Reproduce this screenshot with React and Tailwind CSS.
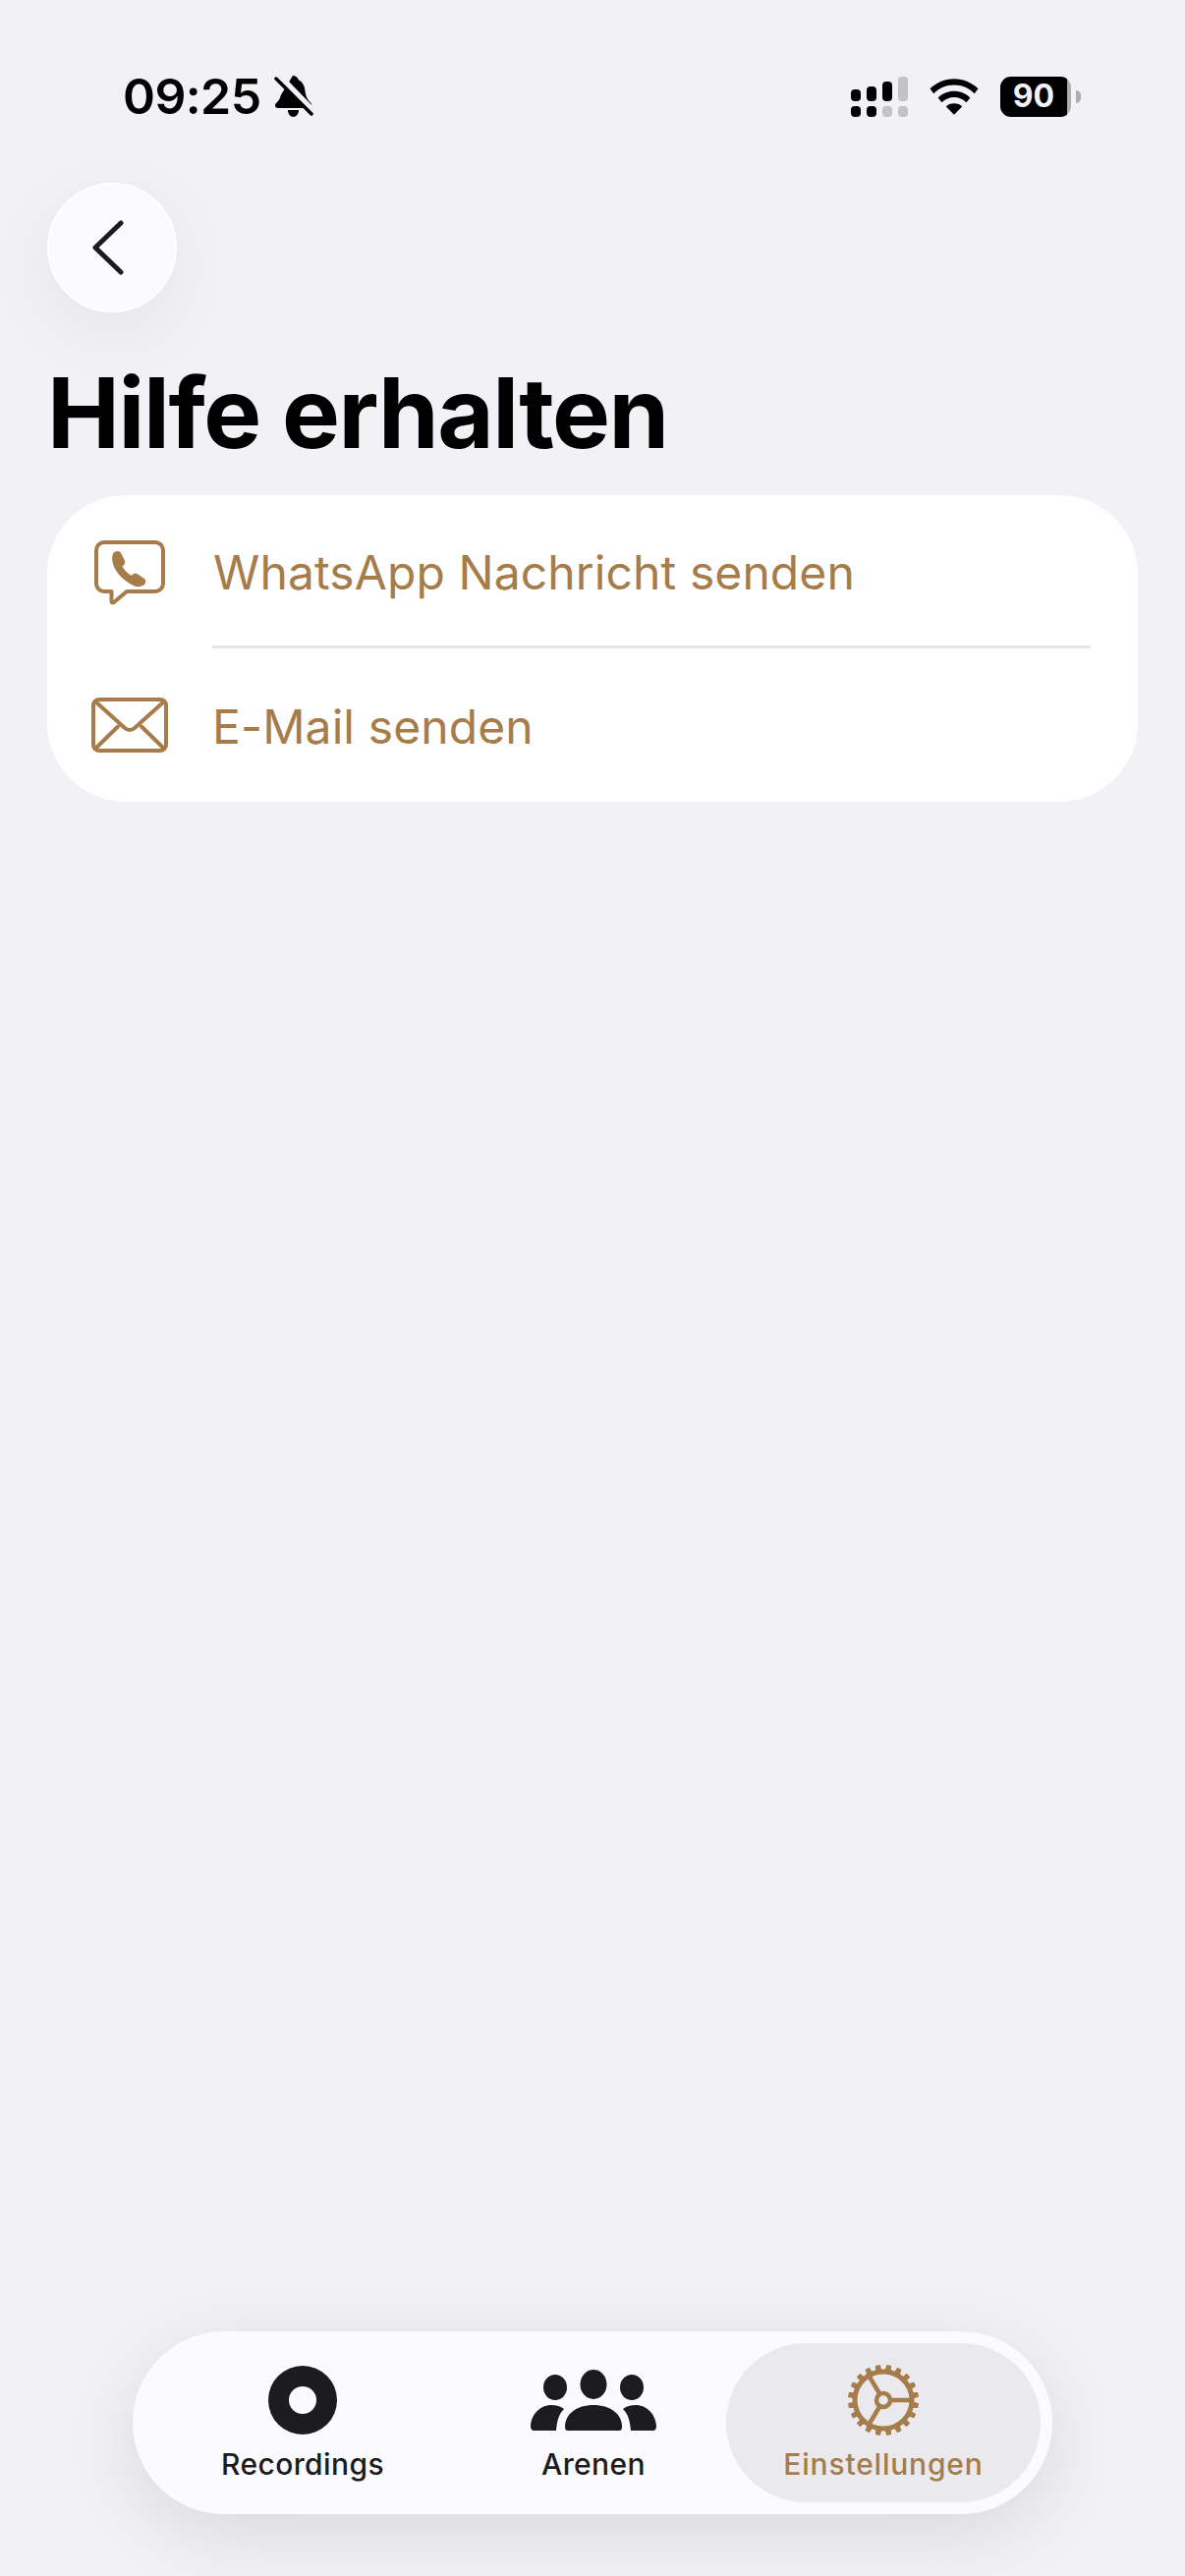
import React from 'react';

const Bell = () => (
  <svg width="40" height="42" viewBox="0 0 40 42" className="ml-[13px]">
    <path d="M19 0c3 0 5 2 6 4.500 4 2 6 6 6.500 11 .5 5 2 8.500 6 12.500 1.500 1.500 1 5-2 5H4c-3 0-4-3-2-5 3-2.500 4-5 5-8.500z" fill="#000" />
    <path d="M14 35h11c0 4-2.500 7-5.500 7S14 39 14 35z" fill="#000" />
    <path d="M5 0l36 37" stroke="#f1f1f6" strokeWidth="6" />
    <path d="M2 3l36 36" stroke="#000" strokeWidth="3.500" strokeLinecap="round" />
  </svg>
);

const Signal = () => (
  <svg width="58" height="41" viewBox="0 0 58 41">
    <rect x="0" y="13" width="10" height="12" rx="4" fill="#000" />
    <rect x="16" y="10" width="10" height="15" rx="4" fill="#000" />
    <rect x="32" y="5" width="10" height="20" rx="4" fill="#000" />
    <rect x="48" y="0" width="10" height="25" rx="4" fill="#c2c2c7" />
    <rect x="0" y="30" width="10" height="11" rx="4" fill="#000" />
    <rect x="16" y="30" width="10" height="11" rx="4" fill="#000" />
    <rect x="32" y="30" width="10" height="11" rx="4" fill="#c2c2c7" />
    <rect x="48" y="30" width="10" height="11" rx="4" fill="#c2c2c7" />
  </svg>
);

const Wifi = () => (
  <svg width="50" height="37" viewBox="0 0 52 38">
    <path d="M26 0c10 0 19 4 25.500 10.500l-4 5C42 10 34.500 6.500 26 6.500S10 10 4.500 15.500l-4-5C7 4 16 0 26 0z" fill="#000" />
    <path d="M26 13c6.500 0 12.500 2.500 17 7l-4 5c-3.500-3.500-8-5.500-13-5.500S16.500 21.500 13 25l-4-5c4.500-4.500 10.500-7 17-7z" fill="#000" />
    <path d="M26 26c3.500 0 6.500 1.300 8.500 3.300L26 38l-8.500-8.700c2-2 5-3.300 8.500-3.300z" fill="#000" />
  </svg>
);

const Battery = () => (
  <div className="flex items-center">
    <div className="h-[41px] w-[72px] rounded-[11px] overflow-hidden bg-[#adadb0]">
      <div className="h-full w-[68px] bg-black flex items-center justify-center">
        <span className="text-[32px] leading-none font-bold text-[#f1f1f6]">90</span>
      </div>
    </div>
    <div className="w-[5px] h-[13px] ml-[5px] rounded-r-full bg-[#adadb0]" />
  </div>
);

const PhoneBubble = () => (
  <svg width="72" height="66" viewBox="0 0 72 66" fill="none">
    <path d="M10 2h52c4.500 0 8 3.500 8 8v34c0 4.500-3.500 8-8 8H33L20 63c-1.500 1-2.500.3-2.500-1.500V52H10c-4.500 0-8-3.500-8-8V10c0-4.500 3.500-8 8-8z" stroke="#a67c4a" strokeWidth="4" strokeLinejoin="round" />
    <path d="M20 14c1-2 5-3 6-1l4 8c.6 1.300.2 2.500-.8 3.500l-2 2c2.500 4.500 6 8 10.500 10.500l2-1.500c1-1 2.400-1.100 3.500-.4l7 4.400c2 1.500 1 4.500-1 5.500-2.500 1.500-5.500 1.500-9 0-11-5-20-15-21-25-.2-2.500.2-4.500.8-6.500z" fill="#a67c4a" stroke="#a67c4a" strokeWidth="2" strokeLinejoin="round" />
  </svg>
);

const Envelope = () => (
  <svg width="78" height="56" viewBox="0 0 78 56" fill="none" stroke="#a67c4a" strokeWidth="4" strokeLinejoin="round" strokeLinecap="round">
    <rect x="2" y="2" width="74" height="52" rx="6" />
    <path d="M4 4l30 27c3 2.500 7 2.500 10 0L74 4" />
    <path d="M4 52l23-22.500M74 52L51 29.500" />
  </svg>
);

const Disc = () => (
  <svg width="70" height="70" viewBox="0 0 70 70">
    <path fillRule="evenodd" d="M35 0a35 35 0 1 0 0 70a35 35 0 0 0 0-70zM35 21a14 14 0 1 1 0 28a14 14 0 0 1 0-28z" fill="#1c1c1e" />
  </svg>
);

const People = () => (
  <svg width="128" height="62" viewBox="0 0 128 62" fill="#1c1c1e">
    <ellipse cx="25" cy="18" rx="12" ry="13" />
    <ellipse cx="64" cy="15" rx="13.500" ry="15" />
    <ellipse cx="103" cy="18" rx="12" ry="13" />
    <path d="M0 57C1 45 10 36 21 36c5 0 10 1.500 13 4-5 5-7 11-8 22H4c-3 0-4-2-4-5z" />
    <path d="M128 57c-1-12-10-21-21-21-5 0-10 1.500-13 4 5 5 7 11 8 22h22c3 0 4-2 4-5z" />
    <path d="M35 58c0-13 12-22 29-22s29 9 29 22c0 3-1 4-3 4H38c-2 0-3-1-3-4z" />
  </svg>
);

const Gear = () => {
  const teeth = Array.from({ length: 20 }, (_, i) => i * 18);
  return (
    <svg width="76" height="76" viewBox="0 0 76 76" fill="none" stroke="#a67c4a">
      {teeth.map((deg) => (
        <path key={deg} d="M35.500 8L36 2.500h4l.5 5.500z" fill="#a67c4a" stroke="#a67c4a" strokeWidth="1" strokeLinejoin="round" transform={`rotate(${deg + 9} 38 38)`} />
      ))}
      <circle cx="38" cy="38" r="29" strokeWidth="5" />
      <circle cx="38" cy="38" r="7" strokeWidth="4.500" />
      <path d="M45 38h24M34.500 32L22 11M34.500 44L22 65" strokeWidth="4.500" />
    </svg>
  );
};

const NavItem = ({ icon, label, active }) => (
  <div className={`flex flex-col items-center justify-center ${active ? 'w-[320px] h-[162px] -ml-[13px] rounded-[81px] bg-[#e9e9ee]' : 'w-[296px] h-full'}`}>
    <div className="h-[74px] flex items-center justify-center">{icon}</div>
    <span className={`mt-[10px] text-[30px] leading-[36px] font-medium ${active ? 'tracking-[0.8px] text-[#a67c4a]' : 'tracking-[0.4px] text-[#1c1c1e]'}`}>{label}</span>
  </div>
);

export default function App() {
  return (
    <div className="relative flex flex-col w-[1206px] h-[2622px] overflow-hidden bg-[#f1f1f6] font-['Inter',sans-serif]">
      <div className="flex items-center justify-between h-[42px] mt-[77px] pl-[125px] pr-[106px]">
        <div className="flex items-center">
          <span className="text-[50px] leading-none font-semibold text-black -tracking-[0.6px]">09:25</span>
          <Bell />
        </div>
        <div className="flex items-center gap-[22px]">
          <Signal />
          <Wifi />
          <Battery />
        </div>
      </div>

      <div className="mt-[67px] ml-[48px] w-[132px] h-[132px] rounded-full bg-[#fafaff] border-2 border-white shadow-[0_20px_80px_rgba(0,0,0,0.06)] flex items-center justify-center">
        <svg width="34" height="56" viewBox="0 0 34 56" fill="none" className="mr-[8px]">
          <path d="M30 3L4 28l26 25" stroke="#1c1c1e" strokeWidth="5" strokeLinecap="round" strokeLinejoin="round" />
        </svg>
      </div>

      <h1 className="mt-[44px] ml-[48px] text-[99px] leading-[116px] font-bold tracking-[-1.4px] text-black">Hilfe erhalten</h1>

      <div className="mt-[26px] mx-[48px] h-[312px] rounded-[80px] bg-white text-[#a67c4a] text-[48px] tracking-[0.1px] pr-[48px]">
        <div className="flex items-center h-[153px]">
          <div className="w-[168px] flex justify-center pt-[4px]"><PhoneBubble /></div>
          <span className="mt-[4px] ml-[1px]">WhatsApp Nachricht senden</span>
        </div>
        <div className="ml-[168px] h-[3px] bg-[#e5e5ea]" />
        <div className="flex items-center h-[156px]">
          <div className="w-[168px] flex justify-center"><Envelope /></div>
          <span className="mt-[3px]">E-Mail senden</span>
        </div>
      </div>

      <div className="absolute left-[135px] top-[2373px] w-[936px] h-[186px] rounded-[93px] bg-[#fafaff] shadow-[0_20px_80px_rgba(0,0,0,0.1)] flex items-center pl-[25px]">
        <NavItem icon={<Disc />} label="Recordings" />
        <NavItem icon={<People />} label="Arenen" />
        <NavItem icon={<Gear />} label="Einstellungen" active />
      </div>
    </div>
  );
}
